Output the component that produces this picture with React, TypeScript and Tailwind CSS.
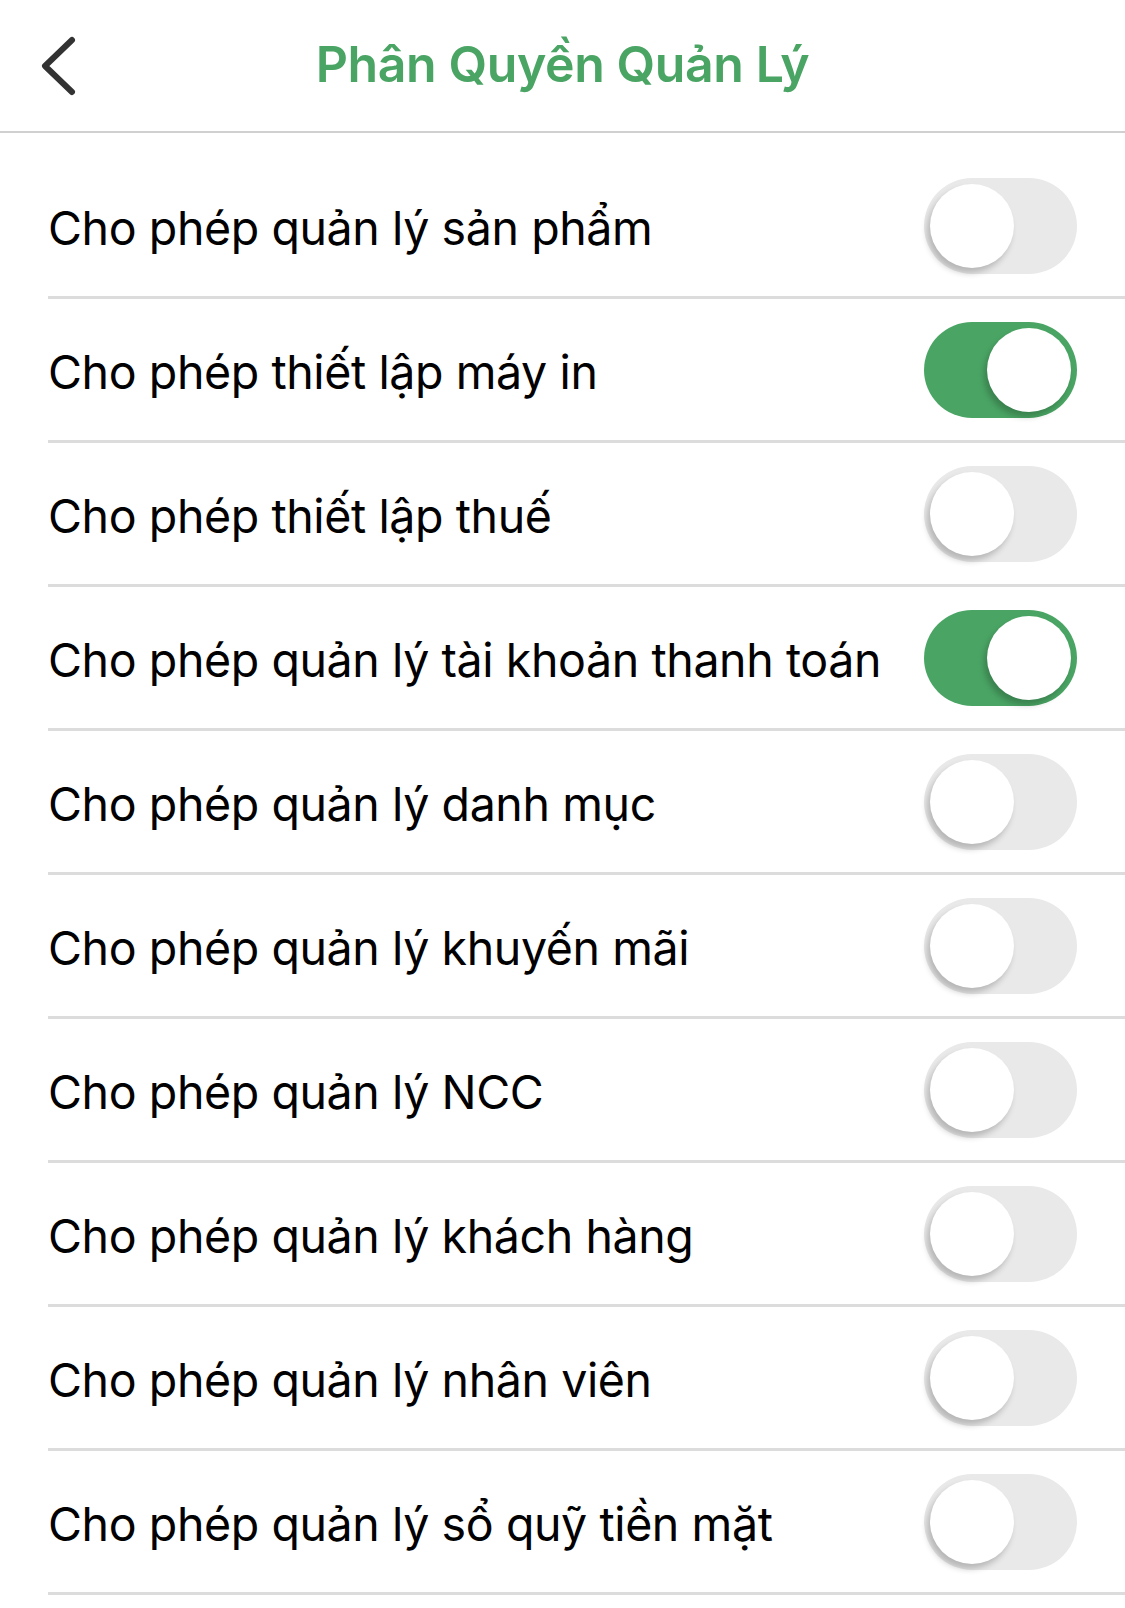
import React, { useState } from "react";

const items = [
  { label: "Cho phép quản lý sản phẩm", on: false },
  { label: "Cho phép thiết lập máy in", on: true },
  { label: "Cho phép thiết lập thuế", on: false },
  { label: "Cho phép quản lý tài khoản thanh toán", on: true },
  { label: "Cho phép quản lý danh mục", on: false },
  { label: "Cho phép quản lý khuyến mãi", on: false },
  { label: "Cho phép quản lý NCC", on: false },
  { label: "Cho phép quản lý khách hàng", on: false },
  { label: "Cho phép quản lý nhân viên", on: false },
  { label: "Cho phép quản lý sổ quỹ tiền mặt", on: false },
];

function Toggle({ on, onClick }: { on: boolean; onClick: () => void }) {
  return (
    <button
      onClick={onClick}
      className={`flex items-center w-[153px] h-[96px] rounded-full p-[6px] shrink-0 ${
        on ? "bg-[#4aa564] justify-end" : "bg-[#e9e9e9] justify-start"
      }`}
    >
      <span className="block w-[84px] h-[84px] rounded-full bg-white shadow-[-3px_5px_6px_rgba(0,0,0,0.22)]"></span>
    </button>
  );
}

export default function App() {
  const [state, setState] = useState(items.map((i) => i.on));

  return (
    <div
      className="w-[1125px] h-[1608px] bg-white overflow-hidden"
      style={{ fontFamily: "Inter, 'Noto Sans', sans-serif" }}
    >
      {/* Header */}
      <div className="relative h-[133px] border-b-2 border-[#d0d0d0] flex items-center justify-center">
        <svg
          className="absolute left-[36px] top-[34px]"
          width="46"
          height="64"
          viewBox="0 0 46 64"
          fill="none"
        >
          <path
            d="M36 6 L9 32 L36 58"
            stroke="#333"
            strokeWidth="6"
            strokeLinecap="round"
            strokeLinejoin="round"
          />
        </svg>
        <h1 className="text-[50px] font-semibold text-[#4aa564] tracking-[-0.4px] mb-[2px]">
          Phân Quyền Quản Lý
        </h1>
      </div>

      {/* Permission list */}
      <div className="pt-[22px]">
        {items.map((item, i) => (
          <div
            key={item.label}
            className="ml-[48px] pr-[48px] h-[144px] border-b-[3px] border-[#dcdcdc] flex items-center justify-between"
          >
            <span className="text-[46.5px] text-black tracking-[-0.4px] pt-[6px]">
              {item.label}
            </span>
            <Toggle
              on={state[i]}
              onClick={() =>
                setState((s) => s.map((v, j) => (j === i ? !v : v)))
              }
            />
          </div>
        ))}
      </div>
    </div>
  );
}
